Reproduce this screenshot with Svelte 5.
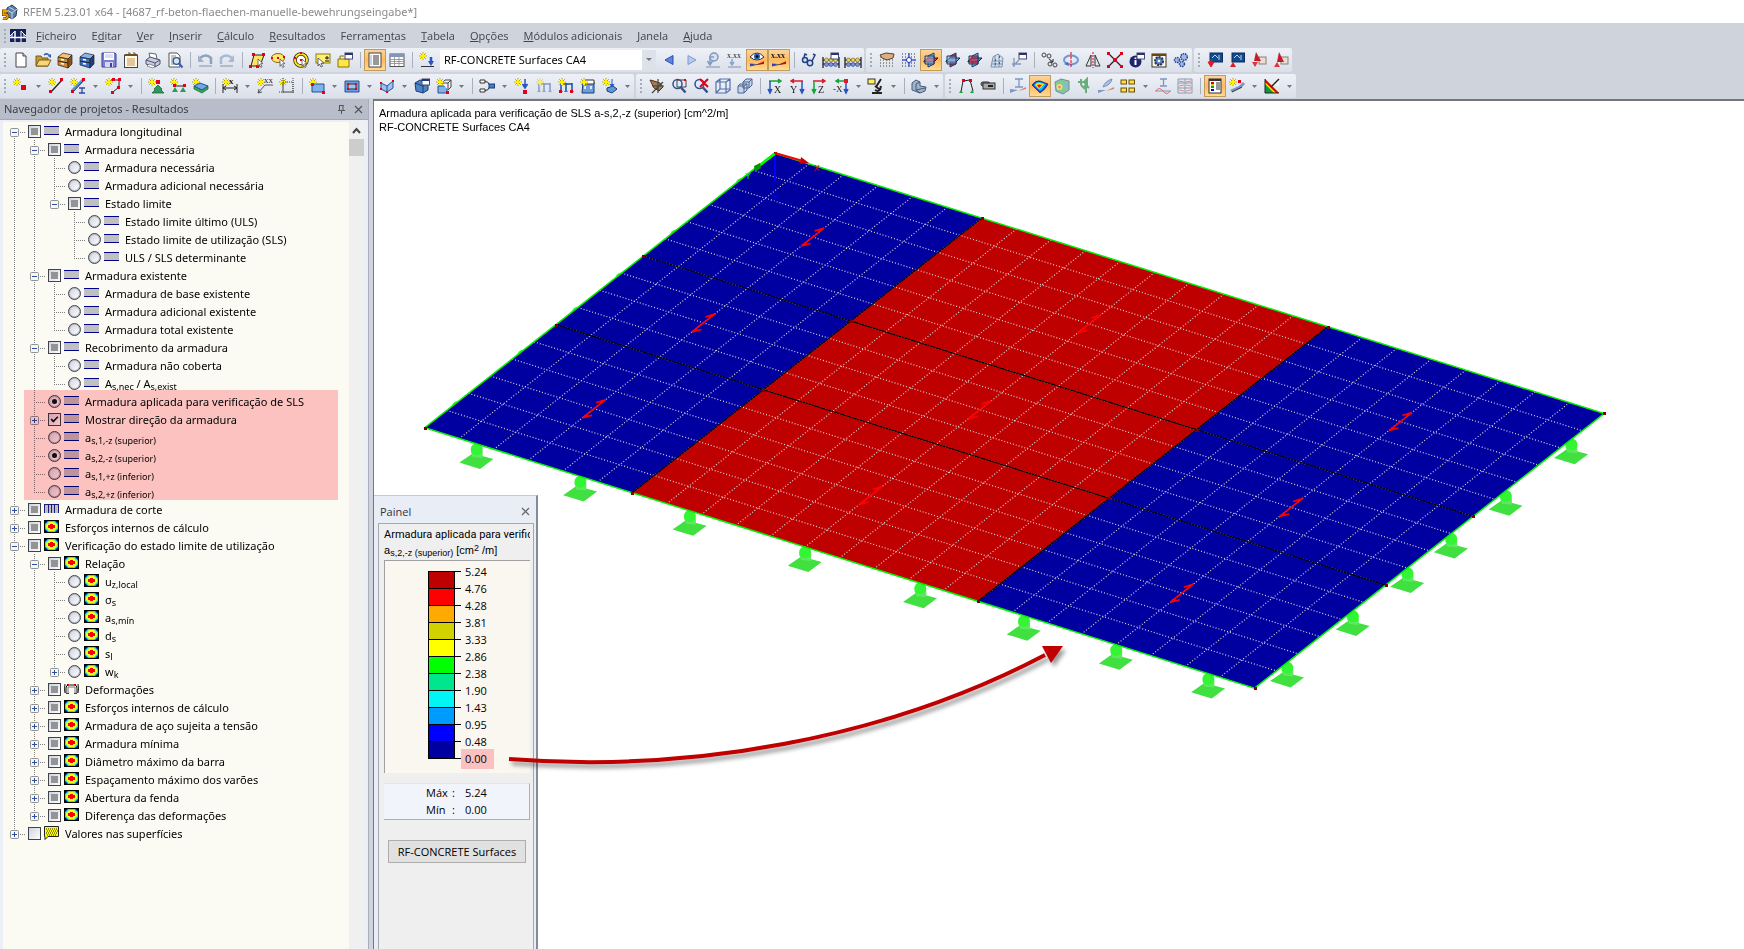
<script lang="ts">
  type TreeRow = {
    level: number;
    label: string;
    control: 'mixed' | 'checked' | 'empty' | 'radio' | 'picked';
    icon: string;
    toggle?: '+' | '-';
    group?: string;
  };
  type ToolItem = { icon?: string; title?: string; active?: boolean; drop?: boolean; sep?: boolean; combo?: boolean };

  // small building blocks shared by several toolbar icons
  const star = '<path d="M4 0v8M0 4h8M1.2 1.2l5.6 5.6M6.8 1.2L1.2 6.8" stroke="#b9a400" stroke-width="1"/><path d="M4 1v6M1 4h6" stroke="#fff100" stroke-width="2"/>';
  const red = (x: number, y: number, s = 3) => `<rect x="${x}" y="${y}" width="${s}" height="${s}" fill="#e3001b"/>`;
  const pointer = '<path d="M9 7l5 4.5-2.4.3 1.5 3-1.3.7-1.5-3L9 14.3z" fill="#fff" stroke="#555" stroke-width=".8"/>';
  const windowBox = '<rect x="8" y="1" width="7.5" height="6" fill="#fff" stroke="#444a6a"/><path d="M8 2h7.500" stroke="#28347a" stroke-width="2"/>';
  const cabinet = (a: string, b: string, c: string) => `<path d="M1 5l5-4 9 2-4 4z" fill="${a}" stroke="#222" stroke-width=".7"/><path d="M1 5l10 2v9L1 13z" fill="${b}" stroke="#222" stroke-width=".7"/><path d="M11 7l4-4v9l-4 4z" fill="${c}" stroke="#222" stroke-width=".7"/><path d="M1 9l10 2" stroke="#222"/><path d="M4 7.500l3 .6M4 11.500l3 .6" stroke="#fff" stroke-width="1.500"/>`;
  const magnifier = '<circle cx="6.500" cy="6" r="4.500" fill="#dcecff" stroke="#35508c" stroke-width="1.500"/><path d="M10 9.500l4.500 5" stroke="#35508c" stroke-width="2.500"/>';
  const beads = '<path d="M0 5v11M16 5v11M0 8h16M0 12h16" stroke="#111" stroke-width="1.200"/><g fill="#ead35a" stroke="#6b5b16" stroke-width=".6"><circle cx="3.500" cy="8" r="2"/><circle cx="8" cy="8" r="2"/><circle cx="12.500" cy="8" r="2"/></g><g fill="#7f95dd" stroke="#25377c" stroke-width=".6"><circle cx="3.500" cy="12.500" r="2"/><circle cx="8" cy="12.500" r="2"/><circle cx="12.500" cy="12.500" r="2"/></g>';
  const dots = '<path d="M1 5h14M1 8h14M1 11h14M1 14h14" stroke="#444" stroke-dasharray="1 2"/>';
  const axis = (name: string, a: string, b: string, flip = false) => flip
    ? `<path d="M14 3H2M5 1L2 3l3 2" fill="${a}" stroke="${a}" stroke-width="1.500"/><path d="M13 3v11M11 11l2 4 2-4" stroke="${b}" fill="${b}" stroke-width="1.500"/><text x="1" y="15" font-size="10">${name}</text>`
    : `<path d="M2 3h12M11 1l3 2-3 2" fill="${a}" stroke="${a}" stroke-width="1.500"/><path d="M3 3v11M1 11l2 4 2-4" stroke="${b}" fill="${b}" stroke-width="1.500"/><text x="7" y="15" font-size="10">${name}</text>`;
  const planes = (a: string, b: string, c: string) => `<path d="M5 4l6-3v11l-6 3z" fill="${a}" stroke="#1a3a66"/><path d="M1 9l4-3h10l-4 4H1z" fill="${b}" fill-opacity=".9" stroke="#123" /><path d="M2 4h9v8H2z" fill="${c}" fill-opacity=".5" stroke="#1a3a66"/>`;
  const frames = '<path d="M3 5v9M8 5v9M14 5v9M3 6h11" stroke="#1c4da0" stroke-width="1.500"/><path d="M1 14l2-3 2 3zM6 14l2-3 2 3zM12 14l2-3 2 3z" fill="#3d74c9"/>';

  const icons: Record<string, string> = {
    new: '<path d="M3 1h7l3 3v11H3z" fill="#fff" stroke="#444"/><path d="M10 1v3h3" fill="#ddd" stroke="#444"/>',
    open: '<path d="M1 14V4h5l1 2h6v8z" fill="#c59a2e" stroke="#7a5b12"/><path d="M1 14l3-6h12l-3 6z" fill="#f5d87a" stroke="#7a5b12"/><path d="M9 3q4-3 6 2" fill="none" stroke="#2f62b5" stroke-width="1.500"/><path d="M13 4l3 2V2z" fill="#2f62b5"/>',
    cabinetBrown: cabinet('#f2c27a', '#d38a34', '#8d5315'),
    cabinetBlue: cabinet('#8cb2ea', '#3d6fc6', '#1d3f86'),
    save: '<path d="M1 1h13l1 1v13H1z" fill="#7b7fd6" stroke="#3d4196"/><rect x="3" y="1" width="10" height="7" fill="#fff"/><path d="M4 3h8M4 5h8" stroke="#b9bde8"/><rect x="4" y="10" width="8" height="5" fill="#d5d7ee"/><rect x="9" y="11" width="2" height="4" fill="#3d4196"/>',
    clipboard: '<rect x="1.500" y="3" width="13" height="12.500" fill="#fffbea" stroke="#444"/><path d="M2 3h12" stroke="#7b4a10" stroke-width="2"/><path d="M5 1h2v3M10 1h2v3" fill="none" stroke="#555"/><path d="M4 7h8M4 9h8M4 11h8M4 13h8" stroke="#c88f4e"/>',
    print: '<path d="M5 6L4 1l7 1 1 5z" fill="#fff" stroke="#667"/><path d="M1 8l4-3 10 3v4l-5 3-9-3z" fill="#c9cbe0" stroke="#50536e"/><path d="M1 8l9 3 5-3M10 11v4" fill="none" stroke="#50536e"/><path d="M4 12l6 2-2 2-6-2z" fill="#fff" stroke="#667" stroke-width=".7"/>',
    preview: '<path d="M2 1h8l3 3v11H2z" fill="#fff" stroke="#555"/><path d="M4 4h5M4 6h3M4 8h2M4 10h2M4 12h3" stroke="#888"/><circle cx="9.500" cy="9" r="3.300" fill="#cfe4fa" stroke="#35508c" stroke-width="1.300"/><path d="M12 11.500l3.500 4" stroke="#3a5fa8" stroke-width="2"/>',
    undo: '<path d="M3 6q6-5 11 0v6" fill="none" stroke="#8fa1bd" stroke-width="2.500"/><path d="M1 3v7h6z" fill="#9fb0c9"/><path d="M2 14h13" stroke="#8393ad"/>',
    redo: '<path d="M13 6Q7 1 2 6v6" fill="none" stroke="#a9bad0" stroke-width="2.500"/><path d="M15 3v7H9z" fill="#a9bad0"/><path d="M1 14h13" stroke="#8393ad"/>',
    selectPoly: `<path d="M5 3h10l-4 11H2z" fill="#ffe55c" stroke="#222"/>${red(3, 1)}${red(13, 1)}${red(0, 13)}${red(7, 13)}${pointer}`,
    selectEllipse: `<ellipse cx="7" cy="6" rx="6.500" ry="4.500" fill="#ffe86b" stroke="#7c6a10"/>${red(0, 5, 2)}${red(6, 5, 2)}${red(12, 4, 2)}${pointer}`,
    selectRing: `<circle cx="8" cy="8" r="6" fill="#fff" stroke="#222" stroke-width="3.500"/><circle cx="8" cy="8" r="6" fill="none" stroke="#ffe21f" stroke-width="2"/>${red(7, 7, 2)}${red(7, 0, 2)}${red(1, 5, 2)}${pointer}`,
    selectPlus: `<rect x="1" y="2" width="14" height="9" fill="#fff170" stroke="#8a7a17"/><path d="M10 6h4M12 4v3.500M10 9h4" stroke="#111"/><path d="M3 6l6 5-3 .3 1.500 3-1.500.7-1.500-3L3 14z" fill="#fff" stroke="#444" stroke-width=".8"/>`,
    selectWindow: `<path d="M1 7h11v8H1z" fill="#ffe74a" stroke="#8a7200"/><path d="M3 7V4h4" fill="none" stroke="#8a7200"/>${windowBox}`,
    listView: '<rect x="2" y="1" width="12" height="14" fill="#fff" stroke="#444"/><path d="M6 4h6M6 6h6M6 8h6M6 10h6M6 12h6" stroke="#333"/><path d="M3.500 4h1M3.500 6h1M3.500 8h1M3.500 10h1M3.500 12h1" stroke="#1b4cc4"/>',
    tableView: '<rect x="1" y="2" width="14" height="12.500" fill="#fff" stroke="#555"/><rect x="1" y="2" width="14" height="3" fill="#8496b4"/><path d="M1 7.500h14M1 9.500h14M1 11.500h14M5.500 5v9M10 5v9" stroke="#888" stroke-width=".8"/>',
    newLoad: `${star}<path d="M12 5v7" stroke="#2956c4" stroke-width="2.500"/><path d="M9 9l3 5 3-5z" fill="#2956c4"/><path d="M2 14.500h13" stroke="#333"/>`,
    prev: '<path d="M12 3.500v9L4 8z" fill="#5c86e6" stroke="#2a4fae"/>',
    next: '<path d="M5 3.500v9l8-4.500z" fill="#b6c9ee" stroke="#7f9bd0"/>',
    loop: '<circle cx="9" cy="5" r="4" fill="#d7e0ee" stroke="#8296b8" stroke-width="1.500"/><path d="M9 5H5v7M2.500 9L5 13l2.500-4" fill="none" stroke="#7f9ccc" stroke-width="1.500"/><path d="M1 15h14" stroke="#8290a5"/>',
    values: '<text x="0" y="6" font-size="8">x.xx</text><path d="M5 7v6M3 10l2 3 2-3" fill="none" stroke="#8aa3cc" stroke-width="1.500"/><path d="M1 15h13" stroke="#8290a5"/>',
    eye: '<path d="M1 5q7-8 14 0-7 6-14 0z" fill="#fff" stroke="#20305a"/><circle cx="8" cy="4.500" r="3" fill="#2c5fb8"/><circle cx="8" cy="4.500" r="1.300" fill="#000"/><path d="M1 14V11.500L7 12z" fill="#2440c8"/><path d="M15 9v3l-8 1z" fill="#e0201b"/><path d="M1 14l14-3" stroke="#333" stroke-width=".8"/>',
    xxx: '<text x="0" y="6" font-size="8" font-weight="700">x.xx</text><path d="M1 14V11.500L7 12z" fill="#2440c8"/><path d="M15 9v3l-8 1z" fill="#e0201b"/><path d="M1 14l14-3" stroke="#333" stroke-width=".8"/>',
    glasses: '<circle cx="4" cy="8" r="2.500" fill="#cfe2fb" stroke="#25407f" stroke-width="1.500"/><circle cx="9" cy="11" r="2.700" fill="#cfe2fb" stroke="#25407f" stroke-width="1.500"/><path d="M3 5l1-3 2 1M11 9l3-6-2-1" fill="none" stroke="#25407f" stroke-width="1.500"/>',
    beads,
    beadsWindow: `${beads}${windowBox}`,
    handGrid: `${dots}<path d="M1 3l6-2 8 1-1 4-6 2-5-2z" fill="#d8b086" stroke="#5c4124"/>`,
    gridCenter: '<path d="M1 2h14M1 5h14M1 8h14M1 11h14M1 14h14" stroke="#333" stroke-dasharray="1 2"/><path d="M8 1v14M1 8h14" stroke="#3b63d8" stroke-width="1.500"/><circle cx="8" cy="8" r="2.500" fill="#fff" stroke="#1b37b0"/>',
    planeXY: planes('#7fb2ea', '#e8293a', '#9fc8f4'),
    planeYZ: planes('#e8293a', '#7fb2ea', '#7fb2ea'),
    planeXZ: planes('#7fb2ea', '#4f86d4', '#ff1020'),
    building: '<path d="M2 15L4 5l5-3 5 4-1 9z" fill="#d5e2f0" stroke="#7f93ad"/><path d="M3 9h11M3 12h11M6 3v12M10 3v12" stroke="#7f93ad"/><path d="M6 8h1M10 5h1M6 12h1M10 11h1" stroke="#e3001b" stroke-width="1.500"/>',
    axisWindow: `<path d="M3 15V6M1 12h9M2 14l6-6" fill="none" stroke="#8497bd" stroke-width="1.300"/>${windowBox}`,
    copyNodes: '<circle cx="3" cy="3" r="2" fill="none" stroke="#444"/><circle cx="8" cy="4" r="2" fill="none" stroke="#444"/><circle cx="9" cy="12" r="2" fill="none" stroke="#444"/><circle cx="14" cy="13" r="2" fill="none" stroke="#444"/><path d="M8 7l4 3M12 7v3H9" fill="none" stroke="#222"/>',
    rotate: '<ellipse cx="8" cy="8" rx="7" ry="4.500" fill="none" stroke="#6f97d8" stroke-width="2"/><path d="M8 0v16" stroke="#e3001b" stroke-dasharray="3 1"/><path d="M1 12l5 2-1-4z" fill="#3f6fc0"/>',
    mirror: '<path d="M6 3v11H1zM10 3v11h5z" fill="none" stroke="#333"/><path d="M8 0v16" stroke="#e3001b" stroke-dasharray="2 1"/>',
    cross: `<path d="M2 2l12 12M14 2L2 14" stroke="#222" stroke-width="1.300"/>${red(0, 0)}${red(13, 0)}${red(0, 13)}${red(13, 13)}${red(6, 6, 4)}`,
    info: `<circle cx="6.500" cy="9.500" r="6" fill="#20246e"/><path d="M6.500 8v5M6.500 5.500v1.500" stroke="#fff" stroke-width="2"/>${windowBox}`,
    gearBox: '<rect x="1" y="2" width="14" height="13" fill="#fff8e2" stroke="#333"/><path d="M1 3h14" stroke="#6a4518" stroke-width="2"/><circle cx="8" cy="9" r="4" fill="#5d7db8" stroke="#1d3566" stroke-dasharray="2 1" stroke-width="2"/><circle cx="8" cy="9" r="1.300" fill="#fff"/>',
    gears: '<g fill="#9fb9ee" stroke="#27468f" stroke-dasharray="1.500 .8" stroke-width="1.500"><circle cx="4" cy="8" r="2.500"/><circle cx="11" cy="5" r="3.300"/><circle cx="9" cy="12" r="2.500"/></g>',
    importBlue: '<rect x="3" y="1" width="12.500" height="9" fill="#134a8e" stroke="#0b2e5c"/><path d="M5 6l3-3 3 3M12 3v5" fill="none" stroke="#bcd8ff"/><path d="M4 7v4M1 10h6l-3 5z" fill="#d81e2c" stroke="#d81e2c"/>',
    exportBlue: '<rect x="3" y="1" width="12.500" height="9" fill="#134a8e" stroke="#0b2e5c"/><path d="M5 6l3-3 3 3M12 3v5" fill="none" stroke="#bcd8ff"/><path d="M1 15h6l-3-5z" fill="#d81e2c"/>',
    importRed: '<rect x="8" y="5" width="7" height="7" fill="#e8ddd0" stroke="#8a8078"/><path d="M5 0l5 9H3z" fill="#c11c27"/><path d="M1 10h6l-3 5z" fill="#e03540"/>',
    exportRed: '<rect x="8" y="5" width="7" height="7" fill="#e8ddd0" stroke="#8a8078"/><path d="M6 0l5 10H4z" fill="#c11c27"/><path d="M1 15h6l-3-5z" fill="#e03540"/>',

    node: `${star}${red(8, 7, 5)}`,
    line: `${star}<path d="M3 14L14 2" stroke="#222" stroke-width="1.300"/>${red(12, 0)}${red(1, 12)}`,
    beam: `${star}<path d="M2 13L13 2" stroke="#5f8fd6" stroke-width="3"/><path d="M3 14L14 2" stroke="#222" stroke-width=".8"/>${red(12, 0)}${red(1, 12)}<path d="M9 10h6M9 15h6M12 10v5" stroke="#2a49a8" stroke-width="1.300"/>`,
    polyline: `${star}<path d="M6 2h8v7l-6 5" fill="none" stroke="#222"/>${red(7, 0)}${red(13, 0)}${red(12, 8)}${red(6, 13)}`,
    support: `${star}<path d="M10 7l4 4-1 1 3 3H4l3-3-1-1z" fill="#2f9b58" stroke="#125a2d" stroke-width=".7"/>${red(8, 2, 4)}`,
    lineSupport: `${star}<path d="M4 8h10" stroke="#222"/>${red(3, 6)}${red(13, 6)}<path d="M5 9l3 5H2zM13 9l3 5h-6z" fill="#2f9b58"/>`,
    surfaceSupport: `${star}<path d="M2 8l8 4 6-4v3l-6 4-8-4z" fill="#38a854" stroke="#14602c" stroke-width=".7"/><path d="M2 8l6-3 8 3-6 4z" fill="#6fa8e8" stroke="#258"/>`,
    dimension: `${star}<path d="M1 6v9M15 6v9M1 10h14M4 8l-3 2 3 2M12 8l3 2-3 2" fill="none" stroke="#222"/><text x="7" y="6" font-size="9" font-weight="700">x</text>`,
    dimensionXX: `${star}<path d="M1 15l7-8h8M1 15l1-4M1 15l4-1" fill="none" stroke="#555"/><text x="7" y="5" font-size="9">xx</text>`,
    sectionBox: `${star}<path d="M4 4h10v10H4zM4 0v16M14 0v16M0 14h16" fill="none" stroke="#444" stroke-dasharray="1 1"/>`,
    surface: `<path d="M3 6h12v8H3z" fill="#7fb2ea" stroke="#25508f"/>${star}${red(2, 5)}${red(13, 13)}`,
    opening: `<path d="M1 3h14v11H1z" fill="#6b9fe0" stroke="#25508f"/><path d="M4 6h8v5H4z" fill="#9cc3f2" stroke="#333"/>${red(3, 5, 2)}${red(11, 5, 2)}${red(3, 10, 2)}${red(11, 10, 2)}`,
    fold: `<path d="M2 5l6 3 6-5v7l-6 4-6-3z" fill="#9cc3f2" stroke="#25508f"/><path d="M8 8v6" stroke="#25508f"/>${red(1, 4, 2)}${red(13, 2, 2)}${red(7, 13, 2)}${red(1, 10, 2)}`,
    solid: `<path d="M1 5l5-3 8 2v8l-5 3-7-2z" fill="#4c83c9" stroke="#1b3d70"/><path d="M1 5l8 3v7M9 8l5-4" fill="none" stroke="#1b3d70"/>${windowBox}`,
    solidNew: `<path d="M2 8h9v7H2z" fill="#7fb2ea" stroke="#25508f"/><path d="M6 5l3-3h6v7l-3 3M6 5h6v7M12 5l3-3" fill="#f3f3f3" stroke="#444"/>${star}${red(10, 13)}`,
    release: '<path d="M1 2h5v3H1zM1 11h5v3H1z" fill="#fff" stroke="#333"/><path d="M6 3.500q4 0 4 3M6 12.500q4 0 4-3" fill="none" stroke="#333"/><rect x="10" y="6" width="5.500" height="4" fill="#3f7fd4" stroke="#1b3d70"/>',
    nodeLoad: `${star}<path d="M11 1v8M8.500 6l2.500 4 2.500-4" fill="#2956c4" stroke="#2956c4" stroke-width="1.500"/>${red(9, 12, 4)}`,
    memberLoadOff: `<g opacity=".5">${frames}${star}</g>`,
    memberLoad: `${frames}${star}${red(1, 12)}${red(12, 12)}`,
    solidLoad: `<path d="M3 4h11v11H2z" fill="#6b9fe0" stroke="#1b3d70"/><path d="M5 2h9v4H5z" fill="#fff" stroke="#333"/><path d="M5 8v3M11 8v3" stroke="#fff" stroke-width="1.500"/>${star}`,
    freeLoad: `${star}<path d="M5 10l6-2 4 3-5 4-5-2z" fill="#5c98dc" stroke="#1b3d70"/><path d="M10 1v7M8 6l2 3 2-3" fill="#2956c4" stroke="#2956c4"/>`,
    hand: '<path d="M1 2l4 1 6 2 3 4-4 4-5-3z" fill="#a97a50" stroke="#4f3318"/><path d="M9 1v14M3 15l11-11M3 8h12" stroke="#444" stroke-width="1.200"/>',
    zoomWindow: `${magnifier}<path d="M6 2h9v7H6z" fill="none" stroke="#444"/>${red(13, 1, 2)}`,
    zoomCancel: `${magnifier}<path d="M7 1l8 8M15 1L7 9" stroke="#e3001b" stroke-width="2"/>`,
    wireBox: '<path d="M1 4l4-3h10v11l-4 3H1zM1 4h10v11M11 4l4-3M5 1v10L1 15M5 11h10" fill="#e9f0fb" fill-opacity=".6" stroke="#5570a5" stroke-width="1.200"/>',
    boxes: '<path d="M6 4l3-3h6v6l-3 3H6zM6 4h6v6M12 4l3-3M1 8l2-2h7v6l-3 3H1zM1 8h6v7M7 8l3-2" fill="#c6d6ee" stroke="#4d648f"/>',
    axisX: axis('X', '#16a53a', '#2956c4'),
    axisY: axis('Y', '#d81e2c', '#2956c4', true),
    axisZ: axis('Z', '#d81e2c', '#16a53a'),
    axisMinusX: `<path d="M14 3H3M6 1L3 3l3 2" fill="#16a53a" stroke="#16a53a" stroke-width="1.500"/><path d="M13 3v11M11 11l2 4 2-4" stroke="#2956c4" fill="#2956c4" stroke-width="1.500"/><rect x="11" y="1" width="4" height="4" fill="#d81e2c"/><text x="0" y="14" font-size="9">-X</text>`,
    microscope: '<rect x="0" y="1" width="7" height="5" fill="#fff15a" stroke="#333"/><path d="M13 1L8 9M7 8l4 3M4 15h10M7 12q5 3 6-4" fill="none" stroke="#222" stroke-width="2"/>',
    solidGrey: '<path d="M1 5l4-3 4 2v4l6 1-1 4-5 2-8-3z" fill="#9fb4cc" stroke="#445a75"/><path d="M5 6v6l4 3M5 6l4-2M5 12l9-2" fill="none" stroke="#445a75"/>',
    model: `<path d="M3 14l2-11 7-1 3 11" fill="none" stroke="#222"/>${red(4, 1)}${red(11, 1)}<path d="M1 15l2-3 2 3zM12 15l2-3 2 3z" fill="#1aa63c"/>`,
    camera: '<rect x="1" y="4" width="9" height="4" rx="2" fill="#888" stroke="#333"/><rect x="3" y="5" width="12" height="6" fill="#aaa" stroke="#333"/><path d="M8 8h5" stroke="#222" stroke-width="2"/>',
    stress: '<path d="M5 1h8M5 9h8M9 1v8" stroke="#7e97c2" stroke-width="1.300"/><path d="M0 11l8 1-8 3z" fill="#7e97c2"/><path d="M16 11l-8 2 8-4z" fill="#e07b7b"/>',
    surfaceResults: '<path d="M0 7q4-5 8-4l8 3q-2 5-8 9z" fill="#1e3bff"/><path d="M2 7q3-4 6-3l6 2q-2 4-6 7z" fill="#00d4e8"/><path d="M3 7q3-3 5-2l4 1q-2 3-5 5z" fill="#ffe600"/><path d="M5 7q2-1 5 0l-3 3z" fill="#f00"/><path d="M0 7q4-5 8-4l8 3q-2 5-8 9z" fill="none" stroke="#222" stroke-width=".7"/>',
    solidResults: '<path d="M1 4l6-3 8 2v9l-6 4-7-3z" fill="#7fc99a" stroke="#7a8a9a"/><circle cx="5.500" cy="9" r="3" fill="#f3e36a"/><circle cx="5.500" cy="9" r="1.500" fill="#e88"/><circle cx="12" cy="8" r="2" fill="#8bb5ee"/>',
    reactions: '<path d="M5 1v6M2 4h6M8 4l3-3v6zM5 7l4 4M10 9v6M7 10l3-3 3 3" fill="#69ae7c" stroke="#69ae7c" stroke-width="2"/>',
    flow: '<path d="M5 9q2-6 9-8-1 6-9 8z" fill="#a9bfe2" stroke="#7e93b8"/><path d="M0 12l8 0-8 3z" fill="#7e97c2"/><path d="M16 11l-8 2 8-4z" fill="#e07b7b"/>',
    windows: '<g fill="#ffdf4d" stroke="#665000"><rect x="1" y="2" width="5.500" height="4"/><rect x="9" y="2" width="5.500" height="4"/><rect x="1" y="10" width="5.500" height="4"/><rect x="9" y="10" width="5.500" height="4"/></g>',
    diagram: '<path d="M5 1h7M5 8h7M8.500 1v7" stroke="#7e97c2" stroke-width="1.300"/><path d="M0 13h16" stroke="#7e97c2"/><path d="M1 13q3-5 7 0t7 0" fill="none" stroke="#dd6b6b"/>',
    resultTable: '<path d="M1 1h14v14H1zM1 5h14M1 10h14M8 1v14" fill="#e3e8f1" stroke="#8f9bb0"/><path d="M2 3l5 1M9 4l5-1M2 8l5-1M9 7l5 1M2 12l5 1M9 13l5-1" stroke="#dd8b8b"/>',
    panel: '<rect x="2" y="1" width="12" height="14" fill="#fff" stroke="#333"/><path d="M2 2h12" stroke="#333" stroke-width="2"/><path d="M4 5h3" stroke="#d00" stroke-width="2"/><path d="M4 7h3" stroke="#e8c800" stroke-width="2"/><path d="M4 9h3" stroke="#0a0" stroke-width="2"/><path d="M4 12h3" stroke="#00d" stroke-width="2"/><path d="M9 5h4M9 7h4M9 9h4M9 11h4" stroke="#333"/>',
    editColors: `${star}<path d="M2 13l9-4 4-4" stroke="#7e97c2" stroke-width="3"/><path d="M3 14l10-5" stroke="#333"/>${red(9, 2)}`,
    palette: '<path d="M1 1v14h14z" fill="#0a9a3a"/><path d="M1 1v5l9 9h5z" fill="#ffe600"/><path d="M1 1l14 14h-3L1 4z" fill="#e3001b"/><path d="M1 1v14h14" fill="none" stroke="#222"/><path d="M8 7l7-6v7z" fill="#f4f4f4"/><path d="M7 9l8-8" stroke="#222" stroke-width="1.500"/>',
  };

  const tools = (names: string): ToolItem[] =>
    names.split(' ').map((name) => {
      if (name === '|') return { sep: true };
      if (name === 'combo') return { combo: true };
      const active = name.startsWith('*');
      const drop = name.endsWith('>');
      return { icon: name.replace(/[*>]/g, ''), active, drop };
    });

  const toolbarRows = [
    [
      tools('new open cabinetBrown cabinetBlue save clipboard print preview | undo redo | selectPoly selectEllipse selectRing selectPlus selectWindow | *listView tableView | newLoad combo prev next loop values *eye *xxx | glasses beadsWindow beads'),
      tools('handGrid gridCenter *planeXY planeYZ planeXZ building axisWindow | copyNodes rotate mirror cross info gearBox gears'),
      tools('importBlue exportBlue importRed exportRed'),
    ],
    [
      tools('node> line beam> polyline> | support lineSupport surfaceSupport | dimension> dimensionXX sectionBox | surface> opening> fold> solid solidNew> | release> nodeLoad memberLoadOff memberLoad solidLoad freeLoad>'),
      tools('hand zoomWindow zoomCancel wireBox boxes | axisX axisY axisZ axisMinusX> microscope> | solidGrey>'),
      tools('model camera | stress *surfaceResults solidResults reactions flow windows> diagram resultTable | *panel editColors> palette>'),
    ],
  ];

  // "_" precedes the underlined access key
  const menu = ['_Ficheiro', 'E_ditar', '_Ver', '_Inserir', '_Cálculo', '_Resultados', 'Ferrame_ntas', '_Tabela', '_Opções', '_Módulos adicionais', '_Janela', '_Ajuda'];

  // "|" switches between base text and subscript
  const rows: TreeRow[] = [
    { level: 0, label: 'Armadura longitudinal', control: 'mixed', icon: 'bars', toggle: '-' },
    { level: 1, label: 'Armadura necessária', control: 'mixed', icon: 'bars', toggle: '-' },
    { level: 2, label: 'Armadura necessária', control: 'radio', icon: 'bars', group: 'result' },
    { level: 2, label: 'Armadura adicional necessária', control: 'radio', icon: 'bars', group: 'result' },
    { level: 2, label: 'Estado limite', control: 'mixed', icon: 'bars', toggle: '-' },
    { level: 3, label: 'Estado limite último (ULS)', control: 'radio', icon: 'bars', group: 'result' },
    { level: 3, label: 'Estado limite de utilização (SLS)', control: 'radio', icon: 'bars', group: 'result' },
    { level: 3, label: 'ULS / SLS determinante', control: 'radio', icon: 'bars', group: 'result' },
    { level: 1, label: 'Armadura existente', control: 'mixed', icon: 'bars', toggle: '-' },
    { level: 2, label: 'Armadura de base existente', control: 'radio', icon: 'bars', group: 'result' },
    { level: 2, label: 'Armadura adicional existente', control: 'radio', icon: 'bars', group: 'result' },
    { level: 2, label: 'Armadura total existente', control: 'radio', icon: 'bars', group: 'result' },
    { level: 1, label: 'Recobrimento da armadura', control: 'mixed', icon: 'bars', toggle: '-' },
    { level: 2, label: 'Armadura não coberta', control: 'radio', icon: 'bars', group: 'result' },
    { level: 2, label: 'A|s,nec| / A|s,exist', control: 'radio', icon: 'bars', group: 'result' },
    { level: 1, label: 'Armadura aplicada para verificação de SLS', control: 'picked', icon: 'bars', group: 'result' },
    { level: 1, label: 'Mostrar direção da armadura', control: 'checked', icon: 'bars', toggle: '+' },
    { level: 1, label: 'a|s,1,-z (superior)', control: 'radio', icon: 'bars', group: 'direction' },
    { level: 1, label: 'a|s,2,-z (superior)', control: 'picked', icon: 'bars', group: 'direction' },
    { level: 1, label: 'a|s,1,+z (inferior)', control: 'radio', icon: 'bars', group: 'direction' },
    { level: 1, label: 'a|s,2,+z (inferior)', control: 'radio', icon: 'bars', group: 'direction' },
    { level: 0, label: 'Armadura de corte', control: 'mixed', icon: 'stirrups', toggle: '+' },
    { level: 0, label: 'Esforços internos de cálculo', control: 'mixed', icon: 'contour', toggle: '+' },
    { level: 0, label: 'Verificação do estado limite de utilização', control: 'mixed', icon: 'contour', toggle: '-' },
    { level: 1, label: 'Relação', control: 'mixed', icon: 'contour', toggle: '-' },
    { level: 2, label: 'u|z,local', control: 'radio', icon: 'contour', group: 'result' },
    { level: 2, label: 'σ|s', control: 'radio', icon: 'contour', group: 'result' },
    { level: 2, label: 'a|s,mín', control: 'radio', icon: 'contour', group: 'result' },
    { level: 2, label: 'd|s', control: 'radio', icon: 'contour', group: 'result' },
    { level: 2, label: 's|l', control: 'radio', icon: 'contour', group: 'result' },
    { level: 2, label: 'w|k', control: 'radio', icon: 'contour', group: 'result', toggle: '+' },
    { level: 1, label: 'Deformações', control: 'mixed', icon: 'deform', toggle: '+' },
    { level: 1, label: 'Esforços internos de cálculo', control: 'mixed', icon: 'contour', toggle: '+' },
    { level: 1, label: 'Armadura de aço sujeita a tensão', control: 'mixed', icon: 'contour', toggle: '+' },
    { level: 1, label: 'Armadura mínima', control: 'mixed', icon: 'contour', toggle: '+' },
    { level: 1, label: 'Diâmetro máximo da barra', control: 'mixed', icon: 'contour', toggle: '+' },
    { level: 1, label: 'Espaçamento máximo dos varões', control: 'mixed', icon: 'contour', toggle: '+' },
    { level: 1, label: 'Abertura da fenda', control: 'mixed', icon: 'contour', toggle: '+' },
    { level: 1, label: 'Diferença das deformações', control: 'mixed', icon: 'contour', toggle: '+' },
    { level: 0, label: 'Valores nas superfícies', control: 'empty', icon: 'values', toggle: '+' },
  ];

  const treeIcons: Record<string, string> = {
    bars: '<rect width="15" height="9" fill="#c0c0c0"/><path d="M0 .5h15M0 8.500h15" stroke="#00008c"/>',
    stirrups: '<rect width="15" height="9" fill="#c0c0c0"/><path d="M.5 0v9M4.500 0v9M7.500 0v9M10.500 0v9M14.500 0v9M0 .5h15" stroke="#1c1c78"/>',
    contour: '<rect y="-2" width="15" height="13" fill="#000"/><rect x="1" y="-1" width="13" height="11" fill="#0000c8"/><path d="M4-1h7l3 3v5l-3 3H4L1 7V2z" fill="#00f0f8"/><path d="M5 0h5l3 3v3l-3 3H5L2 6V3z" fill="#ff0"/><path d="M6 2h3v1h2v3H9v1H6V6H4V3h2z" fill="#f00"/>',
    deform: '<path d="M2 9V4q0-3 3-3h5q3 0 3 3v5" fill="none" stroke="#111"/><path d="M1 0q-1 5 0 9M14 0q1 5 0 9" fill="none" stroke="#111"/><path d="M4 9V3h7v6" fill="none" stroke="#777"/><path d="M2 9.500h3M10 9.500h3M3 .5h2M10 .5h2" stroke="#d00000"/>',
    values: '<path d="M.5-1.500h14v10H4l-3 3V8.500H.5z" fill="#ff0" stroke="#222"/><path d="M2 1h11M3 3h11M2 5h11M3 7h10" stroke="#222" stroke-dasharray="1 1"/>',
  };

  function continues(index: number, level: number): boolean {
    for (let i = index + 1; i < rows.length; i++) {
      if (rows[i].level < level) return false;
      if (rows[i].level === level) return true;
    }
    return false;
  }

  // model drawing: 24 x 16 mesh cells in isometric projection
  const columns = 24;
  const lines = 16;
  const px = (u: number, v: number) => 400.5 + u * 34.571 - v * 21.856;
  const py = (u: number, v: number) => 52 + u * 10.854 + v * 17.163;
  const pt = (u: number, v: number) => `${px(u, v).toFixed(1)} ${py(u, v).toFixed(1)}`;
  const zone = (u0: number, u1: number) => `M${pt(u0, 0)}L${pt(u1, 0)}L${pt(u1, lines)}L${pt(u0, lines)}Z`;
  const uBreaks = [0, 6, 16, 24];
  const vBreaks = [0, 6, 10, 16];
  const meshPath = [
    ...Array.from({ length: columns - 1 }, (_, i) => `M${pt(i + 1, 0)}L${pt(i + 1, lines)}`),
    ...Array.from({ length: lines - 1 }, (_, i) => `M${pt(0, i + 1)}L${pt(columns, i + 1)}`),
  ].join('');
  const fieldPath = `M${pt(6, 0)}L${pt(6, 16)}M${pt(16, 0)}L${pt(16, 16)}M${pt(0, 6)}L${pt(24, 6)}M${pt(0, 10)}L${pt(24, 10)}`;
  const nodes = uBreaks.flatMap((u) => vBreaks.map((v) => [px(u, v), py(u, v)]));
  const edgeV = [1.5, 4.5, 7, 9, 11.5, 14.5];
  const supports = [
    ...edgeV.map((v) => [px(0, v), py(0, v)]),
    ...[1.5, 4.5, 7.667, 11, 14.333, 17.333, 20, 22.667].map((u) => [px(u, 16), py(u, 16)]),
    ...edgeV.map((v) => [px(24, v), py(24, v)]),
  ];
  const directions = [3, 11, 20].flatMap((u) => [3, 8, 13].map((v) => [px(u, v), py(u, v)]));

  const scaleColors = ['#be0000', '#ff0000', '#ffaa00', '#d2d200', '#ffff00', '#00ff00', '#00e68c', '#00f5f5', '#009bff', '#0000ff', '#0000a0'];
  const scaleValues = ['5.24', '4.76', '4.28', '3.81', '3.33', '2.86', '2.38', '1.90', '1.43', '0.95', '0.48', '0.00'];
</script>

<div class="app">
  <header class="title-bar">
    <svg width="16" height="16" viewBox="0 0 16 16" aria-hidden="true">
      <path d="M5 4l5-3 5 4-1 7-4 3-5-3z" fill="#5f7fa8" stroke="#26384f" />
      <path d="M7 3l5 3M5 6l5 3v6M10 9l5-4" fill="none" stroke="#c5d5ea" />
      <path d="M6 7H1.500v3.500H4q2 .5 1.500 2.500-1 2.500-4.500 1.500" fill="none" stroke="#5d3c00" stroke-width="3" />
      <path d="M6 7H1.500v3.500H4q2 .5 1.500 2.500-1 2.500-4.500 1.500" fill="none" stroke="#f2a100" stroke-width="1.800" />
    </svg>
    <span>RFEM 5.23.01 x64 - [4687_rf-beton-flaechen-manuelle-bewehrungseingabe*]</span>
  </header>

  <nav class="menu-bar">
    <i class="grip"></i>
    <svg width="16" height="14" viewBox="0 0 16 14" aria-hidden="true">
      <rect width="16" height="13" fill="#14205c" />
      <path d="M0 8.500h16" stroke="#fff" stroke-width="1.500" />
      <path d="M5 2v11M11 2v11M0 7l5-5 0 6M11 2l5 5M2 8V5M14 8V5" fill="none" stroke="#fff" />
    </svg>
    {#each menu as item}
      {@const key = item.indexOf('_')}
      <button type="button">{item.slice(0, key)}<u>{item[key + 1]}</u>{item.slice(key + 2)}</button>
    {/each}
  </nav>

  <div class="tool-rows">
    {#each toolbarRows as row}
      <div class="tool-row">
        {#each row as bar}
          <div class="toolbar" role="toolbar">
            <i class="grip"></i>
            {#each bar as item}
              {#if item.sep}
                <i class="sep"></i>
              {:else if item.combo}
                <div class="combo">
                  <select aria-label="Caso de carga">
                    <option>RF-CONCRETE Surfaces CA4</option>
                  </select>
                  <svg width="14" height="20" viewBox="0 0 14 20" aria-hidden="true"><rect width="14" height="20" fill="#dde1ea" /><path d="M4 8h6l-3 3z" fill="#777" /></svg>
                </div>
              {:else}
                <button type="button" class="tool" class:active={item.active} aria-label={item.icon}>
                  <svg width="16" height="16" viewBox="0 0 16 16" fill="none">{@html icons[item.icon ?? '']}</svg>
                </button>
                {#if item.drop}
                  <button type="button" class="drop" aria-label={`${item.icon} menu`}>
                    <svg width="5" height="3" viewBox="0 0 5 3"><path d="M0 0h5L2.500 3z" fill="#777" /></svg>
                  </button>
                {/if}
              {/if}
            {/each}
          </div>
        {/each}
      </div>
    {/each}
  </div>

  <main>
    <aside class="navigator">
      <header>
        <span>Navegador de projetos - Resultados</span>
        <button type="button" aria-label="Fixar">
          <svg width="9" height="9" viewBox="0 0 9 9"><path d="M2.500 0v5M1 5.500h7M2.500.5h4M6 0v5M4.500 6v3" fill="none" stroke="#555" /></svg>
        </button>
        <button type="button" aria-label="Fechar navegador">
          <svg width="9" height="9" viewBox="0 0 9 9"><path d="M1 1l7 7M8 1L1 8" stroke="#555" stroke-width="1.200" /></svg>
        </button>
      </header>
      <div class="tree-box">
        <ul class="tree">
          {#each rows as row, index}
            <li>
              {#each Array(row.level + 1) as _, level}
                <span class="guide">
                  {#if level < row.level}
                    {#if continues(index, level)}<i class="v full"></i>{/if}
                  {:else}
                    {#if index > 0}<i class="v top"></i>{/if}
                    {#if continues(index, level)}<i class="v bottom"></i>{/if}
                    <i class="h"></i>
                    {#if row.toggle}
                      <button type="button" class="toggle" aria-label={row.toggle === '+' ? 'Expandir' : 'Recolher'}>
                        <svg width="9" height="9" viewBox="0 0 9 9">
                          <rect x=".5" y=".5" width="8" height="8" rx="1" fill="#f7f7f7" stroke="#919191" />
                          <path d={row.toggle === '+' ? 'M2 4.500h5M4.500 2v5' : 'M2 4.500h5'} stroke="#2c4fa3" />
                        </svg>
                      </button>
                    {/if}
                  {/if}
                </span>
              {/each}
              <label>
                {#if row.group}
                  <input type="radio" name={row.group} checked={row.control === 'picked'} />
                {:else}
                  <input type="checkbox" class={row.control} checked={row.control === 'checked'} />
                {/if}
                <svg class="tree-icon" width="15" height="10" viewBox="0 0 15 10" aria-hidden="true">{@html treeIcons[row.icon]}</svg>
                <span>{#each row.label.split('|') as part, i}{#if i % 2}<sub>{part}</sub>{:else}{part}{/if}{/each}</span>
              </label>
            </li>
          {/each}
          <div class="marker"></div>
        </ul>
        <div class="scrollbar">
          <svg width="15" height="17" viewBox="0 0 15 17"><path d="M4 11l3.500-4 3.500 4" fill="none" stroke="#444" stroke-width="2" /></svg>
          <i></i>
        </div>
      </div>
    </aside>

    <section class="view">
      <svg class="model" aria-label="RF-CONCRETE Surfaces CA4">
        <g>
          {#each supports as [x, y]}
            <g transform={`translate(${x.toFixed(1)} ${y.toFixed(1)})`}>
              <path d="M-17.300 18.700L-4 9.500 16.700 15 3.300 25Z" fill="#3fe03f" />
              <path d="M-6 7L-4 13 6 14 6 7Z" fill="#5fe85f" />
              <circle cy="5.300" r="6" fill="#33f533" />
            </g>
          {/each}
        </g>
        <path d={zone(0, 6)} fill="#0000a0" />
        <path d={zone(6, 16)} fill="#be0000" />
        <path d={zone(16, 24)} fill="#0000a0" />
        <path class="mesh" d={meshPath} />
        <path class="field" d={fieldPath} />
        <path class="outline" d={zone(0, 24)} />
        {#each nodes as [x, y]}
          <rect x={Math.round(x) - 1} y={Math.round(y) - 1} width="3" height="3" fill="#7c0000" />
        {/each}
        {#each directions as [x, y]}
          <path class="direction" transform={`translate(${x.toFixed(1)} ${y.toFixed(1)})`} d="M-11.500 9L11.500-9M11.500-9L2-6M8-8.500L6-4.500M-11.500 9L-2 6.500M-8 8.500L-6 4.500" />
        {/each}
        <path d="M401 53v27" stroke="#0000ff" stroke-width="2" />
        <path d="M401 52l28 8" stroke="#ff0000" stroke-width="2" />
        <path d="M427 56l8 6-9 1z" fill="#c80000" />
        <path d="M401 53l-17 13" stroke="#00ff00" stroke-width="2" />
        <path d="M386 62l-6 3 1 6 6-4z" fill="#009600" />
        <g class="axis-names">
          <text x="440" y="70" fill="#ff0000">X</text>
          <text x="371" y="78" fill="#00ff00">Y</text>
          <text x="398" y="101" fill="#0000ff">Z</text>
        </g>
      </svg>

      <div class="caption">
        <p>Armadura aplicada para verificação de SLS a-s,2,-z (superior) [cm^2/m]</p>
        <p>RF-CONCRETE Surfaces CA4</p>
      </div>

      <aside class="panel">
        <header>
          <span>Painel</span>
          <button type="button" aria-label="Fechar painel">
            <svg width="9" height="9" viewBox="0 0 9 9"><path d="M1 1l7 7M8 1L1 8" stroke="#666" stroke-width="1.200" /></svg>
          </button>
        </header>
        <div class="panel-body">
          <p class="panel-title">Armadura aplicada para verificação de SLS</p>
          <p class="panel-unit">a<sub>s,2,-z (superior)</sub> [cm<sup>2</sup> /m]</p>
          <div class="legend">
            <div class="scale">
              {#each scaleColors as color}
                <i style={`background:${color}`}></i>
              {/each}
            </div>
            <ul>
              {#each scaleValues as value}
                <li class:marked={value === '0.00'}><span>{value}</span></li>
              {/each}
            </ul>
          </div>
          <dl>
            <dt>Máx</dt><dd>:</dd><dd>5.24</dd>
            <dt>Mín</dt><dd>:</dd><dd>0.00</dd>
          </dl>
          <button type="button" class="module">RF-CONCRETE Surfaces</button>
        </div>
      </aside>

      <svg class="callout" aria-hidden="true">
        <path d="M135 658C316 672 511 638 671 554" />
        <path class="head" d="M668 545h21l-12 17z" />
      </svg>
    </section>
  </main>
</div>

<style>
  :global(body) { background: #cfd4dd; }
  .app {
    display: flex;
    flex-direction: column;
    height: 100vh;
    overflow: hidden;
    color: #000;
    font: 11px/16px "Noto Sans", "Open Sans", sans-serif;
  }
  button { padding: 0; border: 0; background: none; color: inherit; font: inherit; }
  p, ul, dl, dd { margin: 0; padding: 0; }
  ul { list-style: none; }
  svg { display: block; flex: none; }

  .title-bar { display: flex; align-items: center; gap: 5px; height: 23px; padding: 0 2px; background: #fff; color: #8a8a8a; white-space: nowrap; }
  .menu-bar { display: flex; align-items: center; height: 25px; background: #ced3dc; color: #40444e; font-family: "Open Sans", sans-serif; }
  .menu-bar button { margin-left: 15px; white-space: nowrap; }
  .menu-bar svg + button { margin-left: 10px; }
  .grip { flex: none; width: 2px; height: 14px; margin: 0 4px; background: repeating-linear-gradient(#a5abb7 0 2px, transparent 2px 4px); }

  .tool-rows { display: grid; gap: 2px; padding-bottom: 1px; background: #ced3dc; }
  .tool-row { display: flex; gap: 2px; height: 24px; }
  .toolbar { display: flex; align-items: center; border-radius: 2px; background: linear-gradient(#eef1f7, #dadfe9); }
  .tool { display: grid; place-items: center; width: 22px; height: 22px; }
  .tool.active { box-shadow: inset 0 0 0 1px #c29b5b; background: linear-gradient(#fbd7a4, #ffb95c 50%, #ffdf9a); }
  .tool svg { font-family: "Liberation Serif", "Times New Roman", serif; overflow: visible; }
  .tool :global(text) { fill: #222; }
  .drop { display: grid; place-items: center; width: 13px; height: 22px; }
  .sep { width: 1px; height: 16px; margin: 0 3px 0 4px; background: #a9afbb; }
  .combo { display: flex; align-items: center; width: 216px; height: 20px; margin: 0 2px; border-radius: 1px; background: #fff; }
  .combo select { flex: 1; min-width: 0; height: 18px; padding: 0 4px; border: 0; appearance: none; background: transparent; color: #000; font: inherit; }

  main { display: flex; flex: 1; min-height: 0; gap: 4px; background: #cfd4dd; }
  .navigator { display: flex; flex: none; flex-direction: column; width: 369px; border-right: 1px solid #a8aebb; box-sizing: border-box; }
  .navigator header { display: flex; align-items: center; gap: 8px; height: 20px; padding: 0 5px 0 4px; background: #b7bec9; color: #3c4048; }
  .navigator header span { flex: 1; }
  .tree-box { display: flex; flex: 1; min-height: 0; padding: 2px 3px 0 3px; border-top: 1px solid #a3a9b6; background: #eceff5; }
  .tree { position: relative; flex: 1; min-width: 0; overflow: hidden; background: #fcfbf3; }
  .tree li { display: flex; height: 18px; padding-left: 5px; white-space: nowrap; }
  .guide { position: relative; flex: none; width: 20px; }
  .guide i { position: absolute; }
  .v { left: 6px; width: 1px; background: repeating-linear-gradient(#808080 0 1px, transparent 1px 2px); }
  .full { top: 0; bottom: 0; }
  .top { top: 0; height: 10px; }
  .bottom { top: 10px; bottom: 0; }
  .h { top: 10px; left: 6px; width: 11px; height: 1px; background: repeating-linear-gradient(90deg, #808080 0 1px, transparent 1px 2px); }
  .toggle { position: absolute; top: 6px; left: 2px; }
  label { display: flex; align-items: center; }
  label span { line-height: 17px; }
  sub, sup { font-size: 9px; line-height: 0; }
  label sub { vertical-align: -2px; }
  .tree-icon { margin: 0 6px 0 3px; overflow: visible; }
  input {
    flex: none;
    display: grid;
    place-items: center;
    width: 13px;
    height: 13px;
    margin: 0;
    border: 1px solid #3f434c;
    appearance: none;
    background: linear-gradient(135deg, #cfd3de, #fff);
  }
  input[type='radio'] { border-radius: 50%; box-shadow: inset 0 0 0 1px #b5b8c2; }
  input[type='radio']:checked::before { width: 5px; height: 5px; border-radius: 50%; background: #111; content: ''; }
  input.mixed::before { width: 7px; height: 7px; background: #949494; content: ''; }
  input.checked::before { width: 7px; height: 3px; border: solid #111; border-width: 0 0 2px 2px; box-sizing: content-box; content: ''; transform: translateY(-1px) rotate(-45deg) scale(.8); }
  .marker { position: absolute; top: 268px; left: 21px; width: 314px; height: 110px; background: #fec5ca; mix-blend-mode: multiply; pointer-events: none; }
  .scrollbar { width: 15px; margin-right: 1px; background: #f0f0f0; }
  .scrollbar i { display: block; height: 17px; background: #cdcdcd; }

  .view { position: relative; flex: 1; min-width: 0; overflow: hidden; border: solid #777; border-width: 2px 0 0 1px; background: #fff; }
  .model, .callout { position: absolute; inset: 0; width: 100%; height: 100%; }
  .mesh { fill: none; stroke: #d8d8d8; stroke-width: 1.2; stroke-dasharray: 1 2; }
  .field { fill: none; stroke: #000; stroke-width: 1.2; }
  .outline { fill: none; stroke: #00f000; stroke-width: 1.5; }
  .direction { fill: none; stroke: #ff0000; stroke-width: 1.6; }
  .axis-names { font: 9px "Liberation Sans", Arial, sans-serif; }
  .caption { position: relative; padding: 5px 5px; font: 11px/14px "Liberation Sans", Arial, sans-serif; }
  .panel {
    position: absolute;
    top: 394px;
    bottom: 0;
    left: 0;
    display: flex;
    flex-direction: column;
    width: 164px;
    box-sizing: border-box;
    padding: 0 2px 0 4px;
    border-top: 1px solid #c5cbd6;
    border-right: 2px solid #858b96;
    background: #e9edf6;
    font: 11px/16px "Open Sans", sans-serif;
  }
  .panel header { display: flex; align-items: center; justify-content: space-between; height: 27px; padding: 4px 4px 0 2px; box-sizing: border-box; color: #333; }
  .panel-body { flex: 1; padding: 3px 3px 0 5px; border: 1px solid #a3a8b3; border-bottom: 0; background: #efefef; }
  .panel-title { overflow: hidden; font-family: Roboto, "Open Sans", sans-serif; white-space: nowrap; }
  .panel-unit { margin-bottom: 2px; font: 11px/15px "Liberation Sans", Arial, sans-serif; white-space: nowrap; }
  .panel-unit sub { vertical-align: -2px; }
  .panel-unit sup { vertical-align: 3px; }
  .legend { display: flex; height: 213px; box-sizing: border-box; padding: 10px 0 0 43px; border: solid #a0a0a0; border-width: 1px 0 0 1px; background: #faf7f0; }
  .scale { display: grid; grid-auto-rows: 17px; width: 27px; height: 188px; box-sizing: border-box; border: solid #000; border-width: 0 1px 1px; background: #000; }
  .scale i { margin-top: 1px; }
  .legend ul { margin-top: -8px; }
  .legend li { display: flex; align-items: center; height: 17px; }
  .legend li::before { width: 6px; height: 1px; background: #000; content: ''; }
  .legend li span { padding: 0 7px 0 4px; line-height: 15px; }
  .legend li.marked span { background: #fbc1c1; line-height: 20px; }
  dl { display: grid; grid-template-columns: 26px 13px auto; margin-top: 10px; padding: 0 0 1px 42px; border: solid #a9a9ea; border-width: 1px 1px 1px 0; border-top-color: #dfe3f3; background: #f2f4fb; line-height: 17px; }
  .module { display: block; width: calc(100% - 8px); height: 23px; margin: 20px 4px 0; border: 1px solid #adadad; background: #e1e1e1; white-space: nowrap; }
  .callout { fill: none; stroke: #c00000; stroke-width: 4; filter: drop-shadow(3px 4px 2px rgb(0 0 0 / 40%)); pointer-events: none; }
  .head { fill: #c00000; stroke: none; }
</style>
